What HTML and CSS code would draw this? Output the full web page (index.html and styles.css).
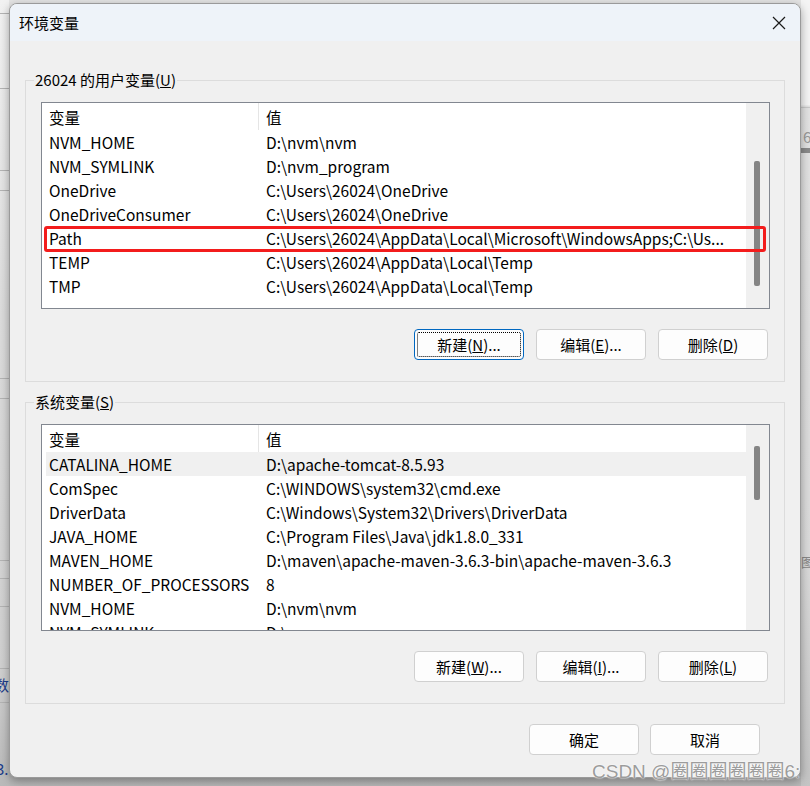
FILE: index.html
```html
<!DOCTYPE html>
<html lang="zh-CN">
<head>
    <meta charset="UTF-8">
    <meta name="viewport" content="width=device-width, initial-scale=1.0">
    <title>环境变量</title>
    <link rel="stylesheet" href="styles.css">
</head>
<body>
    <div class="desktop">
        <div class="behind-left">
            <div class="line" style="top: 13px"></div>
            <div class="line" style="top: 88px"></div>
            <div class="line" style="top: 170px"></div>
            <div class="line" style="top: 190px"></div>
            <div class="line" style="top: 378px"></div>
            <div class="line" style="top: 398px"></div>
            <div class="line" style="top: 560px"></div>
            <div class="line" style="top: 578px"></div>
            <div class="line" style="top: 606px"></div>
            <div class="line" style="top: 668px"></div>
            <div class="line" style="top: 702px"></div>
            <span class="peek peek-a">数</span>
            <span class="peek peek-b">3.</span>
        </div>
        <div class="behind-right">
            <div class="rline" style="top: 107px"></div>
            <span class="peek peek-c">6</span>
            <div class="rbar"></div>
            <span class="peek peek-d">图6</span>
        </div>

        <div class="dialog">
            <div class="titlebar">
                <span class="title">环境变量</span>
                <svg class="close" width="14" height="14" viewBox="0 0 14 14">
                    <path d="M1 1 L13 13 M13 1 L1 13" stroke="#1a1a1a" stroke-width="1.2" fill="none"/>
                </svg>
            </div>

            <div class="content">
                <div class="group">
                    <div class="group-title">26024 的用户变量(<u>U</u>)</div>
                    <div class="list">
                        <div class="list-main">
                            <div class="row head"><div class="c1">变量</div><div class="c2">值</div></div>
                            <div class="row"><div class="c1">NVM_HOME</div><div class="c2">D:\nvm\nvm</div></div>
                            <div class="row"><div class="c1">NVM_SYMLINK</div><div class="c2">D:\nvm_program</div></div>
                            <div class="row"><div class="c1">OneDrive</div><div class="c2">C:\Users\26024\OneDrive</div></div>
                            <div class="row"><div class="c1">OneDriveConsumer</div><div class="c2">C:\Users\26024\OneDrive</div></div>
                            <div class="row"><div class="c1">Path</div><div class="c2">C:\Users\26024\AppData\Local\Microsoft\WindowsApps;C:\Us...</div></div>
                            <div class="row"><div class="c1">TEMP</div><div class="c2">C:\Users\26024\AppData\Local\Temp</div></div>
                            <div class="row"><div class="c1">TMP</div><div class="c2">C:\Users\26024\AppData\Local\Temp</div></div>
                        </div>
                        <div class="scrollbar"><div class="thumb thumb-user"></div></div>
                        <div class="mark"></div>
                    </div>
                    <div class="buttons">
                        <button class="btn focused"><span class="focus-ring">新建(<u>N</u>)...</span></button>
                        <button class="btn">编辑(<u>E</u>)...</button>
                        <button class="btn">删除(<u>D</u>)</button>
                    </div>
                </div>

                <div class="group">
                    <div class="group-title">系统变量(<u>S</u>)</div>
                    <div class="list">
                        <div class="list-main">
                            <div class="row head"><div class="c1">变量</div><div class="c2">值</div></div>
                            <div class="row selected"><div class="c1">CATALINA_HOME</div><div class="c2">D:\apache-tomcat-8.5.93</div></div>
                            <div class="row"><div class="c1">ComSpec</div><div class="c2">C:\WINDOWS\system32\cmd.exe</div></div>
                            <div class="row"><div class="c1">DriverData</div><div class="c2">C:\Windows\System32\Drivers\DriverData</div></div>
                            <div class="row"><div class="c1">JAVA_HOME</div><div class="c2">C:\Program Files\Java\jdk1.8.0_331</div></div>
                            <div class="row"><div class="c1">MAVEN_HOME</div><div class="c2">D:\maven\apache-maven-3.6.3-bin\apache-maven-3.6.3</div></div>
                            <div class="row"><div class="c1">NUMBER_OF_PROCESSORS</div><div class="c2">8</div></div>
                            <div class="row"><div class="c1">NVM_HOME</div><div class="c2">D:\nvm\nvm</div></div>
                            <div class="row"><div class="c1">NVM_SYMLINK</div><div class="c2">D:\nvm_program</div></div>
                        </div>
                        <div class="scrollbar"><div class="thumb thumb-system"></div></div>
                    </div>
                    <div class="buttons">
                        <button class="btn">新建(<u>W</u>)...</button>
                        <button class="btn">编辑(<u>I</u>)...</button>
                        <button class="btn">删除(<u>L</u>)</button>
                    </div>
                </div>

                <div class="footer">
                    <button class="btn">确定</button>
                    <button class="btn">取消</button>
                </div>
            </div>
        </div>

        <div class="watermark">CSDN @圈圈圈圈圈圈6:</div>
    </div>
</body>
</html>
```

FILE: styles.css
```css
* {
    box-sizing: border-box;
}
body {
    margin: 0;
    font-family: "Noto Sans CJK SC", sans-serif;
    color: #000;
}
.desktop {
    position: relative;
    width: 810px;
    height: 786px;
    overflow: hidden;
    background: linear-gradient(#e4e4e4, #d2d2d2 60%, #b8b8b8);
}

/* windows peeking out behind the dialog */
.behind-left {
    position: absolute;
    left: 0;
    top: 0;
    width: 9px;
    height: 786px;
    background: linear-gradient(#f2f2f2, #dcdcdc 40%, #d0d0d0 85%, #b9b9b9);
}
.line {
    position: absolute;
    left: 0;
    width: 9px;
    height: 1px;
    background: #b4b4b4;
}
.behind-right {
    position: absolute;
    right: 0;
    top: 0;
    width: 9px;
    height: 786px;
    background: linear-gradient(#f4f4f4, #f4f4f4 105px, #e2e2e2 106px, #dadada 70%, #c4c4c4);
}
.rline {
    position: absolute;
    left: 0;
    width: 9px;
    height: 1px;
    background: #c8c8c8;
}
.rbar {
    position: absolute;
    left: 0;
    top: 148px;
    width: 9px;
    height: 5px;
    background: #8a8a8a;
}
.peek {
    position: absolute;
    font-size: 15px;
    line-height: 18px;
    white-space: nowrap;
}
.peek-a {
    left: -6px;
    top: 676px;
    color: #1b3d8c;
}
.peek-b {
    left: -4px;
    top: 760px;
    color: #1b3d8c;
}
.peek-c {
    left: 2px;
    top: 128px;
    color: #999;
}
.peek-d {
    left: 0;
    top: 553px;
    color: #888;
    font-size: 13px;
}

/* dialog window */
.dialog {
    position: absolute;
    left: 9px;
    top: 3px;
    width: 792px;
    height: 775px;
    background: #f0f0f0;
    border: 1px solid #9a9a9a;
    border-radius: 8px;
    box-shadow: 0 3px 10px rgba(0, 0, 0, 0.35);
    overflow: hidden;
}
.titlebar {
    height: 37px;
    background: #eef3f9;
    display: flex;
    align-items: center;
    justify-content: space-between;
    padding: 0 14px 0 9px;
}
.title {
    font-size: 15px;
}
.close {
    margin-top: 1px;
}
.content {
    padding-top: 39px;
}

.group {
    margin: 0 15px 20px 15px;
    border: 1px solid #dcdcdc;
    padding: 0 0 21px 0;
}
.group-title {
    display: table;
    margin: -11px 0 0 8px;
    padding: 0 1px;
    background: #f0f0f0;
    font-size: 15px;
    line-height: 20px;
}

.list {
    position: relative;
    margin: 12px 14px 0 15px;
    height: 207px;
    border: 1px solid #828790;
    background: #fff;
    display: flex;
    overflow: hidden;
}
.list-main {
    flex: 1;
    overflow: hidden;
    padding-left: 4px;
}
.row {
    display: flex;
    height: 24px;
    align-items: center;
    font-size: 15.5px;
    white-space: nowrap;
}
.row.head {
    height: 27px;
}
.row.selected {
    background: #f0f0f0;
}
.c1 {
    width: 213px;
    padding-left: 3px;
    flex: none;
}
.c2 {
    padding-left: 7px;
}
.head .c1 {
    align-self: stretch;
    display: flex;
    align-items: center;
    border-right: 1px solid #e5e5e5;
}
.scrollbar {
    width: 23px;
    flex: none;
    background: #f0f0f0;
    padding-left: 8px;
}
.thumb {
    width: 6px;
    background: #858585;
    border-radius: 2px;
}
.thumb-user {
    margin-top: 58px;
    height: 125px;
}
.thumb-system {
    margin-top: 21px;
    height: 54px;
}
.mark {
    position: absolute;
    left: 2px;
    top: 123px;
    width: 722px;
    height: 26px;
    border: 3px solid #f31c1c;
    border-radius: 3px;
}

.buttons {
    display: flex;
    justify-content: flex-end;
    gap: 12px;
    margin: 20px 16px 0 0;
}
.btn {
    width: 110px;
    height: 31px;
    background: #fdfdfd;
    border: 1px solid #d0d0d0;
    border-radius: 4px;
    font-family: "Noto Sans CJK SC", sans-serif;
    font-size: 15px;
    color: #000;
    padding: 0;
}
.btn.focused {
    border-color: #0067c0;
    padding: 2px;
}
.focus-ring {
    display: flex;
    height: 100%;
    align-items: center;
    justify-content: center;
    border: 1px dotted #000;
    border-radius: 2px;
}

.footer {
    display: flex;
    justify-content: flex-end;
    gap: 11px;
    padding: 0 40px 0 0;
}

.watermark {
    position: absolute;
    left: 592px;
    top: 756px;
    font-family: "Liberation Sans", "Noto Sans CJK SC", sans-serif;
    font-size: 19px;
    color: #9c9c9c;
    text-shadow: 0 0 2px #fff, 0 0 1px #fff;
    white-space: nowrap;
}
```
